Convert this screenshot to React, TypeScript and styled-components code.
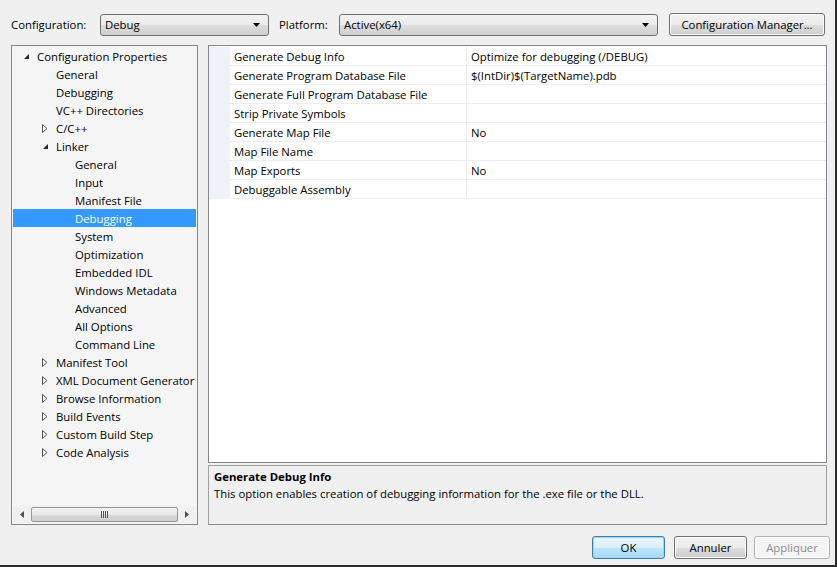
import React from 'react';
import styled, { createGlobalStyle } from 'styled-components';

const Global = createGlobalStyle`
  html, body { margin: 0; padding: 0; background: #f0f0f0; }
  body { font-family: "Open Sans", "Noto Sans", sans-serif; font-size: 11.35px; color: #000; }
  * { box-sizing: border-box; }
`;

const Window = styled.div`
  width: 837px;
  height: 567px;
  background: #f0f0f0;
  border-right: 2px solid #2b2b2b;
  border-bottom: 2px solid #2b2b2b;
  display: flex;
  flex-direction: column;
  padding: 13px 8px 0 11px;
`;

const TopBar = styled.div`
  display: flex;
  align-items: center;
  height: 23px;
`;

const Label = styled.span<{ $w: number; $ml?: number }>`
  width: ${(p) => p.$w}px;
  margin-left: ${(p) => p.$ml ?? 0}px;
  flex: none;
  white-space: nowrap;
`;

const Combo = styled.div<{ $w: number }>`
  width: ${(p) => p.$w}px;
  height: 22px;
  flex: none;
  border: 1px solid #707070;
  border-radius: 3px;
  background: linear-gradient(#f2f2f2 0%, #ebebeb 50%, #dddddd 51%, #cfcfcf 100%);
  display: flex;
  align-items: center;
  justify-content: space-between;
  padding: 0 8px 0 4px;
`;

const PushButton = styled.button<{ $w: number; $ml?: number; $focused?: boolean }>`
  width: ${(p) => p.$w}px;
  margin-left: ${(p) => p.$ml ?? 0}px;
  height: 23px;
  flex: none;
  font: inherit;
  color: ${(p) => (p.disabled ? '#8d8d8d' : '#000')};
  border: 1px solid ${(p) => (p.$focused ? '#3c7fb1' : p.disabled ? '#adb2b5' : '#707070')};
  border-radius: 3px;
  background: ${(p) =>
    p.disabled
      ? '#f4f4f4'
      : p.$focused
      ? 'linear-gradient(#eaf6fd 0%, #d9f0fc 50%, #bee6fd 51%, #a7d9f5 100%)'
      : 'linear-gradient(#f2f2f2 0%, #ebebeb 50%, #dddddd 51%, #cfcfcf 100%)'};
  box-shadow: ${(p) => (p.$focused ? 'inset 0 0 0 1px #9ed5f3' : 'inset 0 0 0 1px #fcfcfc')};
  padding: 0;
  display: flex;
  align-items: center;
  justify-content: center;
`;

const Main = styled.div`
  display: flex;
  gap: 10px;
  margin-top: 9px;
  height: 480px;
`;

const TreePanel = styled.div`
  width: 187px;
  flex: none;
  border: 1px solid #828790;
  background: #f5f5f5;
  display: flex;
  flex-direction: column;
  padding: 1px 1px 0 1px;
`;

const TreeList = styled.div`
  flex: 1;
  overflow: hidden;
`;

const TreeRow = styled.div<{ $level: number; $selected?: boolean }>`
  height: 18px;
  display: flex;
  align-items: center;
  white-space: nowrap;
  padding-left: ${(p) => 10 + p.$level * 19}px;
  background: ${(p) => (p.$selected ? '#3399ff' : 'transparent')};
  color: ${(p) => (p.$selected ? '#fff' : '#000')};
`;

const Expander = styled.span`
  width: 14px;
  flex: none;
  display: flex;
  align-items: center;
`;

const HScroll = styled.div`
  height: 17px;
  margin-bottom: 1px;
  display: flex;
  align-items: center;
  background: #f0f0f0;
`;

const ScrollArrow = styled.div`
  width: 18px;
  height: 17px;
  flex: none;
  display: flex;
  align-items: center;
  justify-content: center;
`;

const ScrollThumb = styled.div`
  flex: 1;
  height: 15px;
  border: 1px solid #979797;
  border-radius: 2px;
  background: linear-gradient(#f3f3f3 0%, #e8e8e8 50%, #d9d9d9 51%, #cfcfcf 100%);
  display: flex;
  align-items: center;
  justify-content: center;
`;

const Grip = styled.div`
  width: 7px;
  height: 7px;
  background: repeating-linear-gradient(90deg, #555 0 1px, transparent 1px 2px);
`;

const RightCol = styled.div`
  width: 619px;
  flex: none;
  display: flex;
  flex-direction: column;
  gap: 2px;
`;

const Grid = styled.div`
  flex: 1;
  border: 1px solid #828790;
  background: #fff;
  padding-top: 1px;
`;

const GridRow = styled.div`
  display: flex;
  height: 19px;
`;

const Gutter = styled.div`
  width: 21px;
  flex: none;
  background: #eff3f9;
`;

const Cell = styled.div<{ $w?: number }>`
  ${(p) => (p.$w ? `width: ${p.$w}px; flex: none; border-right: 1px solid #eeeeee;` : 'flex: 1;')}
  border-bottom: 1px solid #eeeeee;
  padding-left: 4px;
  display: flex;
  align-items: center;
  white-space: nowrap;
  overflow: hidden;
`;

const Desc = styled.div`
  height: 60px;
  flex: none;
  border: 1px solid #a0a0a0;
  border-bottom-color: #8a8a8a;
  background: #f0f0f0;
  padding: 2px 5px;
  line-height: 17px;
`;

const DescTitle = styled.div`
  font-weight: 700;
`;

const BottomBar = styled.div`
  display: flex;
  justify-content: flex-end;
  margin-top: 11px;
  margin-right: -3px;
`;

const Caret = () => (
  <svg width="7" height="4" viewBox="0 0 7 4">
    <path d="M0 0H7L3.5 4Z" fill="#000" />
  </svg>
);

const Arrow = ({ open }: { open: boolean }) =>
  open ? (
    <svg width="7" height="7" viewBox="0 0 7 7">
      <path d="M6 1V6H1Z" fill="#262626" />
    </svg>
  ) : (
    <svg width="6" height="9" viewBox="0 0 6 9">
      <path d="M0.5 0.5L5 4.5L0.5 8.5Z" fill="none" stroke="#555" strokeWidth="1" />
    </svg>
  );

type Node = { label: string; level: number; exp?: 'open' | 'closed'; sel?: boolean };

const tree: Node[] = [
  { label: 'Configuration Properties', level: 0, exp: 'open' },
  { label: 'General', level: 1 },
  { label: 'Debugging', level: 1 },
  { label: 'VC++ Directories', level: 1 },
  { label: 'C/C++', level: 1, exp: 'closed' },
  { label: 'Linker', level: 1, exp: 'open' },
  { label: 'General', level: 2 },
  { label: 'Input', level: 2 },
  { label: 'Manifest File', level: 2 },
  { label: 'Debugging', level: 2, sel: true },
  { label: 'System', level: 2 },
  { label: 'Optimization', level: 2 },
  { label: 'Embedded IDL', level: 2 },
  { label: 'Windows Metadata', level: 2 },
  { label: 'Advanced', level: 2 },
  { label: 'All Options', level: 2 },
  { label: 'Command Line', level: 2 },
  { label: 'Manifest Tool', level: 1, exp: 'closed' },
  { label: 'XML Document Generator', level: 1, exp: 'closed' },
  { label: 'Browse Information', level: 1, exp: 'closed' },
  { label: 'Build Events', level: 1, exp: 'closed' },
  { label: 'Custom Build Step', level: 1, exp: 'closed' },
  { label: 'Code Analysis', level: 1, exp: 'closed' },
];

const props: [string, string][] = [
  ['Generate Debug Info', 'Optimize for debugging (/DEBUG)'],
  ['Generate Program Database File', '$(IntDir)$(TargetName).pdb'],
  ['Generate Full Program Database File', ''],
  ['Strip Private Symbols', ''],
  ['Generate Map File', 'No'],
  ['Map File Name', ''],
  ['Map Exports', 'No'],
  ['Debuggable Assembly', ''],
];

export default function App() {
  return (
    <>
      <Global />
      <Window>
        <TopBar>
          <Label $w={89}>Configuration:</Label>
          <Combo $w={169}>
            <span>Debug</span>
            <Caret />
          </Combo>
          <Label $w={60} $ml={10}>Platform:</Label>
          <Combo $w={319}>
            <span>Active(x64)</span>
            <Caret />
          </Combo>
          <PushButton $w={156} $ml={11}>Configuration Manager...</PushButton>
        </TopBar>
        <Main>
          <TreePanel>
            <TreeList>
              {tree.map((n, i) => (
                <TreeRow key={i} $level={n.level} $selected={n.sel}>
                  <Expander>{n.exp ? <Arrow open={n.exp === 'open'} /> : null}</Expander>
                  {n.label}
                </TreeRow>
              ))}
            </TreeList>
            <HScroll>
              <ScrollArrow>
                <svg width="4" height="7" viewBox="0 0 4 7">
                  <path d="M4 0V7L0 3.5Z" fill="#4d4d4d" />
                </svg>
              </ScrollArrow>
              <ScrollThumb>
                <Grip />
              </ScrollThumb>
              <ScrollArrow>
                <svg width="4" height="7" viewBox="0 0 4 7">
                  <path d="M0 0V7L4 3.5Z" fill="#4d4d4d" />
                </svg>
              </ScrollArrow>
            </HScroll>
          </TreePanel>
          <RightCol>
            <Grid>
              {props.map(([k, v], i) => (
                <GridRow key={i}>
                  <Gutter />
                  <Cell $w={237}>{k}</Cell>
                  <Cell>{v}</Cell>
                </GridRow>
              ))}
            </Grid>
            <Desc>
              <DescTitle>Generate Debug Info</DescTitle>
              <div>This option enables creation of debugging information for the .exe file or the DLL.</div>
            </Desc>
          </RightCol>
        </Main>
        <BottomBar>
          <PushButton $w={73} $focused>OK</PushButton>
          <PushButton $w={73} $ml={9}>Annuler</PushButton>
          <PushButton $w={76} $ml={7} disabled>Appliquer</PushButton>
        </BottomBar>
      </Window>
    </>
  );
}
